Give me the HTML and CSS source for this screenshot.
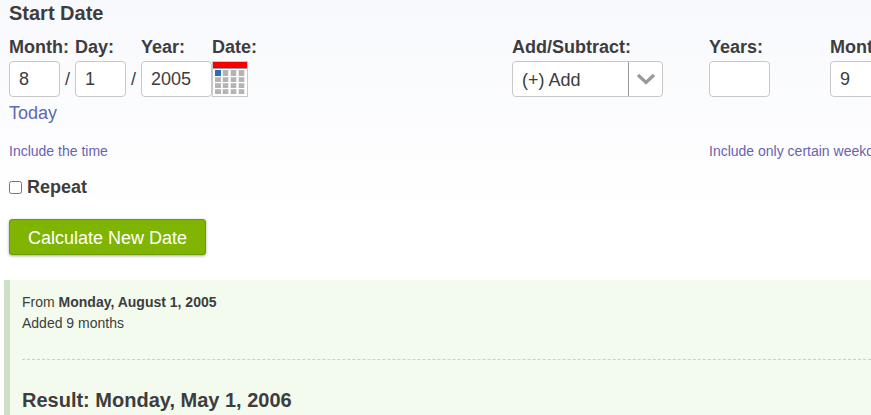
FILE: index.html
```html
<!DOCTYPE html>
<html lang="en">
<head>
  <meta charset="UTF-8">
  <title>Date Calculator</title>
  <link rel="stylesheet" href="styles.css">
</head>
<body>
  <form class="calc-form">
    <h2 class="section-title">Start Date</h2>
    <div class="date-row">
      <div class="date-grid">
        <label class="field-label col-month">Month:</label>
        <label class="field-label col-day">Day:</label>
        <label class="field-label col-year">Year:</label>
        <label class="field-label col-cal">Date:</label>
        <input class="text-input" type="text" value="8">
        <span class="slash">/</span>
        <input class="text-input" type="text" value="1">
        <span class="slash">/</span>
        <input class="text-input" type="text" value="2005">
        <svg class="cal-icon" width="36" height="36" viewBox="0 0 36 36">
          <rect x="0.5" y="0.5" width="35" height="35" fill="#fff" stroke="#c8c8c8"/>
          <rect x="1" y="1" width="34" height="6" fill="#f60000"/>
          <rect x="1" y="7" width="34" height="1" fill="#9a9a9a"/>
          <rect x="3" y="9" width="6" height="6" fill="#2a6db5"/>
          <rect x="10.7" y="9" width="5.6" height="6" fill="#b4b4b4"/>
          <rect x="18.7" y="9" width="5.6" height="6" fill="#b4b4b4"/>
          <rect x="26.7" y="9" width="5.6" height="6" fill="#b4b4b4"/>
          <rect x="3" y="16.2" width="6" height="4.8" fill="#b4b4b4"/>
          <rect x="10.7" y="16.2" width="5.6" height="4.8" fill="#b4b4b4"/>
          <rect x="18.7" y="16.2" width="5.6" height="4.8" fill="#b4b4b4"/>
          <rect x="26.7" y="16.2" width="5.6" height="4.8" fill="#b4b4b4"/>
          <rect x="3" y="22.2" width="6" height="4.8" fill="#b4b4b4"/>
          <rect x="10.7" y="22.2" width="5.6" height="4.8" fill="#b4b4b4"/>
          <rect x="18.7" y="22.2" width="5.6" height="4.8" fill="#b4b4b4"/>
          <rect x="26.7" y="22.2" width="5.6" height="4.8" fill="#b4b4b4"/>
          <rect x="3" y="28.2" width="6" height="4.8" fill="#b4b4b4"/>
          <rect x="10.7" y="28.2" width="5.6" height="4.8" fill="#b4b4b4"/>
          <rect x="18.7" y="28.2" width="5.6" height="4.8" fill="#b4b4b4"/>
          <rect x="26.7" y="28.2" width="5.6" height="4.8" fill="#b4b4b4"/>
        </svg>
        <a class="today-link" href="#">Today</a>
      </div>
      <div class="change-group">
        <div class="field field-select">
          <label class="field-label">Add/Subtract:</label>
          <div class="select-box">
            <span class="select-value">(+) Add</span>
            <span class="select-arrow">
              <svg width="18" height="12" viewBox="0 0 18 12"><path d="M1 2l8 7.5L17 2" fill="none" stroke="#999" stroke-width="3.2"/></svg>
            </span>
          </div>
        </div>
        <div class="field field-years">
          <label class="field-label">Years:</label>
          <input class="text-input" type="text">
        </div>
        <div class="field field-months">
          <label class="field-label">Months:</label>
          <input class="text-input" type="text" value="9">
        </div>
      </div>
    </div>

    <div class="options-row">
      <a class="small-link time-link" href="#">Include the time</a>
      <a class="small-link" href="#">Include only certain weekdays</a>
    </div>

    <label class="repeat-label"><input type="checkbox" class="repeat-check"> Repeat</label>

    <button type="button" class="btn-calc">Calculate New Date</button>
  </form>

  <div class="result-box">
    <p class="result-line">From <strong>Monday, August 1, 2005</strong></p>
    <p class="result-line">Added 9 months</p>
    <hr class="result-sep">
    <h2 class="result-title">Result: Monday, May 1, 2006</h2>
  </div>
</body>
</html>
```

FILE: styles.css
```css
html, body {
  height: 100%;
}
body {
  margin: 0;
  width: 871px;
  height: 415px;
  overflow: hidden;
  font-family: "Liberation Sans", Arial, sans-serif;
  color: #3d3d3d;
  background: linear-gradient(#f8f9fd, #fff 215px);
}
.calc-form {
  padding: 0 0 0 9px;
  height: 280px;
}
.section-title {
  margin: 0;
  padding-top: 3px;
  font-size: 20px;
  line-height: 20px;
  font-weight: bold;
}
.date-row {
  display: flex;
  margin-top: 14px;
}
.date-grid {
  display: grid;
  grid-template-columns: 51px 15px 51px 15px 71px 36px;
  grid-template-rows: 20px 36px;
  row-gap: 4px;
  width: 503px;
  flex: none;
  align-content: start;
}
.field-label {
  font-size: 18px;
  line-height: 20px;
  font-weight: bold;
  white-space: nowrap;
}
.col-month { grid-column: 1 / 3; }
.col-day { grid-column: 3 / 5; }
.col-year { grid-column: 5; }
.col-cal { grid-column: 6; }
.text-input {
  box-sizing: border-box;
  width: 100%;
  height: 36px;
  margin: 0;
  padding: 0 9px;
  border: 1px solid #c8c8c8;
  border-radius: 4px;
  background: #fff;
  font: 18px "Liberation Sans", Arial, sans-serif;
  color: #3d3d3d;
}
.slash {
  font-size: 18px;
  line-height: 36px;
  text-align: center;
}
.today-link {
  grid-column: 1 / 5;
  margin-top: 2px;
  font-size: 18px;
  line-height: 20px;
  color: #5f68b4;
  text-decoration: none;
}
.change-group {
  display: flex;
  flex: none;
}
.field {
  display: flex;
  flex-direction: column;
  gap: 4px;
}
.field-select {
  width: 151px;
  margin-right: 46px;
}
.field-years {
  width: 61px;
  margin-right: 60px;
}
.field-months {
  width: 61px;
}
.select-box {
  box-sizing: border-box;
  display: flex;
  height: 36px;
  border: 1px solid #c8c8c8;
  border-radius: 4px;
  background: #fff;
  font-size: 18px;
  line-height: 36px;
}
.select-value {
  flex: 1;
  padding-left: 9px;
}
.select-arrow {
  display: flex;
  align-items: center;
  justify-content: center;
  width: 33px;
  border-left: 1px solid #999;
}
.options-row {
  display: flex;
  margin-top: 19px;
}
.small-link {
  font-size: 14px;
  line-height: 18px;
  color: #6a62b0;
  text-decoration: none;
  white-space: nowrap;
}
.time-link {
  width: 700px;
  flex: none;
}
.repeat-label {
  display: flex;
  align-items: center;
  margin-top: 17px;
  font-size: 18px;
  line-height: 20px;
  font-weight: bold;
}
.repeat-check {
  width: 13px;
  height: 13px;
  margin: 0 5px 0 0;
}
.btn-calc {
  display: block;
  box-sizing: border-box;
  width: 197px;
  height: 36px;
  margin-top: 22px;
  padding: 2px 0 0;
  border: 1px solid #6f9c00;
  border-radius: 3px;
  background: #7fb500;
  box-shadow: 0 1px 3px rgba(0,0,0,0.35);
  font: 18px "Liberation Sans", Arial, sans-serif;
  color: #fff;
}
.result-box {
  margin-left: 4px;
  padding: 12px 0 0 12px;
  height: 123px;
  border-left: 6px solid #cde0c5;
  background: #f3fbef;
}
.result-line {
  margin: 0;
  font-size: 14px;
  line-height: 21px;
}
.result-sep {
  margin: 25px 0 0;
  border: 0;
  border-top: 1px dashed #c9d3c5;
}
.result-title {
  margin: 28px 0 0;
  font-size: 20px;
  line-height: 24px;
  font-weight: bold;
}
```
